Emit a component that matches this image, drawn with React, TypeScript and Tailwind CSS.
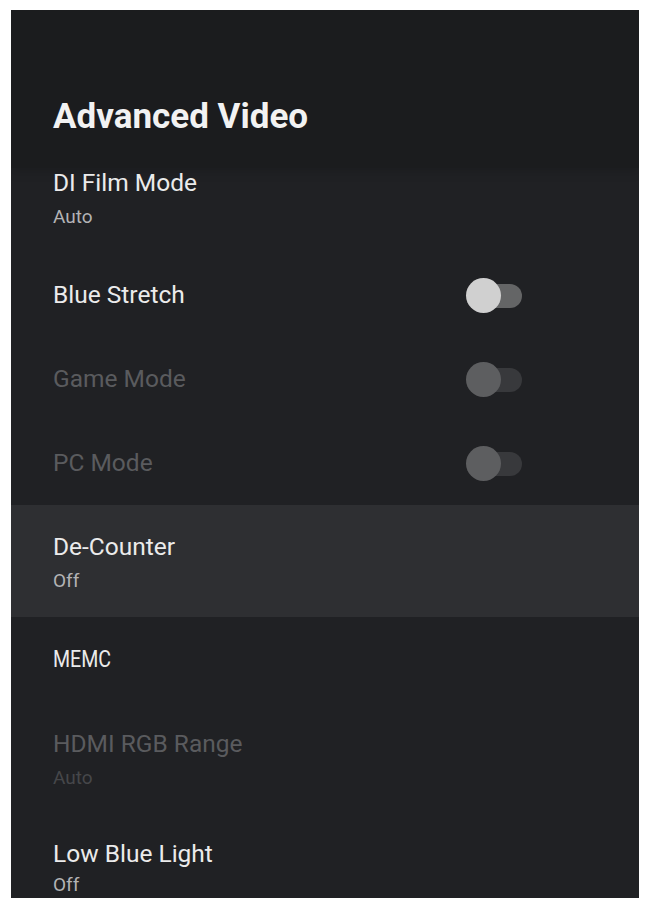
import React from "react";

type Row = {
  title: string;
  disabled?: boolean;
  narrow?: boolean;
};

const Toggle = ({ disabled }: { disabled?: boolean }) => (
  <div className="relative w-[56px] h-[35px] shrink-0">
    <div
      className={`absolute left-[10px] right-0 top-[6px] h-[24px] rounded-full ${
        disabled ? "bg-[#38393c]" : "bg-[#646566]"
      }`}
    />
    <div
      className={`absolute left-0 top-0 w-[35px] h-[35px] rounded-full ${
        disabled ? "bg-[#5d5e60]" : "bg-[#d0d0d0]"
      }`}
    />
  </div>
);

const Title = ({ row }: { row: Row }) => (
  <div
    className={`leading-[28px] text-[24.5px] ${
      row.narrow ? "inline-block scale-x-[0.8] origin-left" : ""
    } ${row.disabled ? "text-[#5a5b5e]" : "text-[#ebebeb]"}`}
  >
    {row.title}
  </div>
);

const Sub = ({ text, disabled, tight }: { text: string; disabled?: boolean; tight?: boolean }) => (
  <div
    className={`text-[19px] ${tight ? "mt-[8px] leading-[18px]" : "mt-[9px] leading-[22px]"} ${
      disabled ? "text-[#46474a]" : "text-[#b3b3b5]"
    }`}
  >
    {text}
  </div>
);

export default function App() {
  const rows: Row[] = [
    { title: "Blue Stretch" },
    { title: "Game Mode", disabled: true },
    { title: "PC Mode", disabled: true },
  ];

  return (
    <div className="w-[650px] h-[910px] bg-white pt-[10px] pl-[11px] font-['Roboto',sans-serif]">
      <div className="w-[628px] h-[888px] overflow-hidden bg-[#202124] flex flex-col">
        <div className="h-[158px] shrink-0 bg-[#1b1c1e] px-[42px] pt-[87px] shadow-[0_4px_10px_rgba(0,0,0,0.15)]">
          <h1 className="text-[35px] leading-[40px] font-bold text-[#f2f2f2]">
            Advanced Video
          </h1>
        </div>

        <div className="h-[85px] shrink-0 px-[42px] pt-[1px]">
          <Title row={{ title: "DI Film Mode" }} />
          <Sub text="Auto" />
        </div>

        {rows.map((r) => (
          <div
            key={r.title}
            className="h-[84px] shrink-0 flex items-center justify-between pl-[42px] pr-[117px]"
          >
            <Title row={r} />
            <Toggle disabled={r.disabled} />
          </div>
        ))}

        <div className="h-[112px] shrink-0 px-[42px] pt-[28px] bg-[#2e2f32]">
          <Title row={{ title: "De-Counter" }} />
          <Sub text="Off" />
        </div>

        <div className="h-[84px] shrink-0 flex items-center px-[42px]">
          <Title row={{ title: "MEMC", narrow: true }} />
        </div>

        <div className="h-[112px] shrink-0 px-[42px] pt-[29px]">
          <Title row={{ title: "HDMI RGB Range", disabled: true }} />
          <Sub text="Auto" disabled />
        </div>

        <div className="shrink-0 px-[42px] pt-[27px]">
          <Title row={{ title: "Low Blue Light" }} />
          <Sub text="Off" tight />
        </div>
      </div>
    </div>
  );
}
